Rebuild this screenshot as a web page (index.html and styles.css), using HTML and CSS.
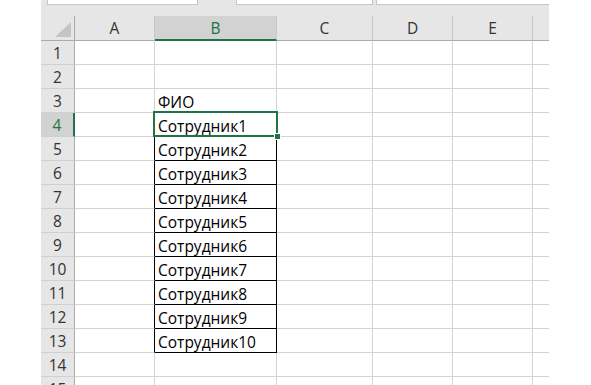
FILE: index.html
```html
<!DOCTYPE html>
<html lang="ru">
  <head>
    <meta charset="UTF-8" />
    <title>Лист1</title>
    <link rel="stylesheet" href="styles.css">
  </head>
  <body>
    <div class="window">
      <div class="topbar">
        <div class="box box-name"></div>
        <div class="box box-mid"></div>
        <div class="box box-formula"></div>
      </div>

      <div class="sheet">
        <!-- column headers -->
        <div class="corner"><div class="corner-mark"></div></div>
        <div class="col-head">A</div>
        <div class="col-head active">B</div>
        <div class="col-head">C</div>
        <div class="col-head">D</div>
        <div class="col-head">E</div>
        <div class="col-head last"></div>

        <div class="row-head">1</div>
        <div class="cell"></div><div class="cell"></div><div class="cell"></div><div class="cell"></div><div class="cell"></div><div class="cell last"></div>

        <div class="row-head">2</div>
        <div class="cell"></div><div class="cell"></div><div class="cell"></div><div class="cell"></div><div class="cell"></div><div class="cell last"></div>

        <div class="row-head">3</div>
        <div class="cell"></div><div class="cell">ФИО</div><div class="cell"></div><div class="cell"></div><div class="cell"></div><div class="cell last"></div>

        <div class="row-head active">4</div>
        <div class="cell edge"></div><div class="cell boxed selected">Сотрудник1<span class="handle"></span></div><div class="cell"></div><div class="cell"></div><div class="cell"></div><div class="cell last"></div>

        <div class="row-head">5</div>
        <div class="cell edge"></div><div class="cell boxed">Сотрудник2</div><div class="cell"></div><div class="cell"></div><div class="cell"></div><div class="cell last"></div>

        <div class="row-head">6</div>
        <div class="cell edge"></div><div class="cell boxed">Сотрудник3</div><div class="cell"></div><div class="cell"></div><div class="cell"></div><div class="cell last"></div>

        <div class="row-head">7</div>
        <div class="cell edge"></div><div class="cell boxed">Сотрудник4</div><div class="cell"></div><div class="cell"></div><div class="cell"></div><div class="cell last"></div>

        <div class="row-head">8</div>
        <div class="cell edge"></div><div class="cell boxed">Сотрудник5</div><div class="cell"></div><div class="cell"></div><div class="cell"></div><div class="cell last"></div>

        <div class="row-head">9</div>
        <div class="cell edge"></div><div class="cell boxed">Сотрудник6</div><div class="cell"></div><div class="cell"></div><div class="cell"></div><div class="cell last"></div>

        <div class="row-head">10</div>
        <div class="cell edge"></div><div class="cell boxed">Сотрудник7</div><div class="cell"></div><div class="cell"></div><div class="cell"></div><div class="cell last"></div>

        <div class="row-head">11</div>
        <div class="cell edge"></div><div class="cell boxed">Сотрудник8</div><div class="cell"></div><div class="cell"></div><div class="cell"></div><div class="cell last"></div>

        <div class="row-head">12</div>
        <div class="cell edge"></div><div class="cell boxed">Сотрудник9</div><div class="cell"></div><div class="cell"></div><div class="cell"></div><div class="cell last"></div>

        <div class="row-head">13</div>
        <div class="cell edge"></div><div class="cell boxed">Сотрудник10</div><div class="cell"></div><div class="cell"></div><div class="cell"></div><div class="cell last"></div>

        <div class="row-head">14</div>
        <div class="cell"></div><div class="cell"></div><div class="cell"></div><div class="cell"></div><div class="cell"></div><div class="cell last"></div>

        <div class="row-head">15</div>
        <div class="cell"></div><div class="cell"></div><div class="cell"></div><div class="cell"></div><div class="cell"></div><div class="cell last"></div>
      </div>
    </div>
  </body>
</html>
```

FILE: styles.css
```css
body {
  margin: 0;
  background: #fff;
  font-family: "Open Sans", "Liberation Sans", Arial, sans-serif;
  font-size: 15.5px;
  line-height: 1;
  color: #000;
  overflow: hidden;
}

.window {
  margin-left: 41px;
  width: 508px;
  background: #e6e6e6;
}

/* formula bar remains at the top */
.topbar {
  display: flex;
  height: 16px;
  align-items: flex-start;
}

.box {
  height: 4px;
  background: #fff;
  border: 1px solid #c6c6c6;
  border-top: none;
}

.box-name {
  margin-left: 6px;
  width: 149px;
}

.box-mid {
  margin-left: 38px;
  width: 135px;
}

.box-formula {
  margin-left: 3px;
  flex: 1;
  border-right: none;
}

/* grid */
.sheet {
  display: grid;
  grid-template-columns: 34px 80px 122px 96px 80px 80px 16px;
  grid-template-rows: 25px repeat(15, 24px);
}

.sheet > div {
  box-sizing: border-box;
  display: flex;
  align-items: flex-end;
  border-right: 1px solid #d4d4d4;
  border-bottom: 1px solid #d4d4d4;
}

.corner {
  background: #e6e6e6;
  border-right-color: #ababab !important;
  border-bottom-color: #ababab !important;
  justify-content: flex-end;
  padding: 0 3px 3px 0;
}

.corner-mark {
  width: 16px;
  height: 15px;
  background: #c4c4c4;
  clip-path: polygon(100% 0, 100% 100%, 0 100%);
}

.col-head {
  background: #e6e6e6;
  justify-content: center;
  align-items: center !important;
  color: #333;
  border-right-color: #c8c8c8 !important;
  border-bottom-color: #ababab !important;
  padding-top: 2px;
}

.col-head.active {
  background: #d2d2d2;
  color: #217346;
  border-bottom: 2px solid #217346 !important;
  padding-top: 3px;
}

.col-head.last {
  border-right: none !important;
}

.row-head {
  background: #e6e6e6;
  justify-content: center;
  align-items: center !important;
  color: #333;
  border-right-color: #ababab !important;
  border-bottom-color: #d0d0d0 !important;
  padding-top: 2px;
}

.row-head.active {
  background: #d2d2d2;
  color: #217346;
  border-right: 2px solid #217346 !important;
}

.cell {
  background: #fff;
  padding: 0 3px 2px 3px;
  white-space: nowrap;
}

.cell.last {
  border-right: none !important;
}

/* thin black borders around the list */
.cell.edge {
  border-right-color: #000 !important;
}

.cell.boxed {
  border-right-color: #000 !important;
  border-bottom-color: #000 !important;
}

.cell.selected {
  position: relative;
}

.cell.selected::after {
  content: "";
  position: absolute;
  left: -2px;
  top: -2px;
  right: -2px;
  bottom: -1px;
  border: 2px solid #217346;
}

.handle {
  position: absolute;
  right: -5px;
  bottom: -4px;
  width: 5px;
  height: 5px;
  background: #217346;
  border: 1px solid #fff;
  z-index: 1;
}
```
